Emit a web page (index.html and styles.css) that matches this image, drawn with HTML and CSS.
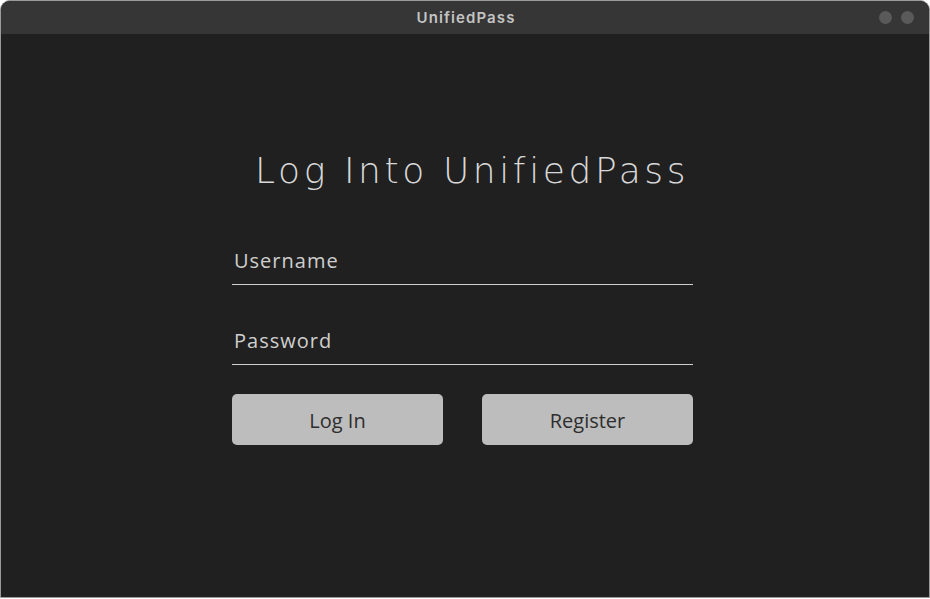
FILE: index.html
```html
<!DOCTYPE html>
<html>
<head>
<meta charset="utf-8">
<link rel="stylesheet" href="styles.css">
</head>
<body>
<div class="window">
  <div class="titlebar">
    <span class="title">UnifiedPass</span>
    <div class="dots"><span class="dot"></span><span class="dot"></span></div>
  </div>
  <div class="content">
    <h1 class="heading">Log Into UnifiedPass</h1>
    <div class="form">
      <div class="field"><span class="label">Username</span></div>
      <div class="field"><span class="label">Password</span></div>
      <div class="buttons">
        <button class="btn">Log In</button>
        <button class="btn">Register</button>
      </div>
    </div>
  </div>
</div>
</body>
</html>
```
FILE: styles.css
```css
html, body { margin: 0; padding: 0; background: #ffffff; }
body { width: 930px; height: 599px; overflow: hidden; }
.window {
  box-sizing: border-box;
  width: 930px;
  height: 598px;
  border: 1px solid #9a9a9a;
  border-radius: 10px 10px 0 0;
  overflow: hidden;
  background: #202020;
  display: flex;
  flex-direction: column;
}
.titlebar {
  height: 33px;
  flex: none;
  background: #363636;
  position: relative;
  display: flex;
  align-items: center;
  justify-content: center;
}
.title {
  font-family: "Inter", "Liberation Sans", sans-serif;
  font-weight: 600;
  font-size: 15px;
  color: #c4c4c4;
  letter-spacing: 1.1px;
  margin-right: -2px;
}
.dots {
  position: absolute;
  right: 15px;
  top: 10px;
  display: flex;
  gap: 9px;
}
.dot { width: 13px; height: 13px; border-radius: 50%; background: #5a5a5a; }
.content {
  flex: 1;
  display: flex;
  flex-direction: column;
  align-items: center;
}
.heading {
  margin: 115px 0 0 14px;
  font-family: "DejaVu Sans", sans-serif;
  font-weight: 200;
  font-size: 36px;
  letter-spacing: 3.6px;
  color: #d8d8d8;
  line-height: 44px;
}
.form { width: 461px; margin-top: 42px; margin-left: -5px; }
.field {
  height: 50px;
  border-bottom: 1px solid #d0d0d0;
  margin-bottom: 30px;
  display: flex;
  align-items: center;
  padding-left: 2px;
  box-sizing: border-box;
}
.field + .field { margin-bottom: 29px; }
.label {
  font-family: "Open Sans", sans-serif;
  font-size: 20px;
  letter-spacing: 1px;
  color: #cfcfcf;
  margin-top: 1px;
}
.buttons { display: flex; justify-content: space-between; }
.btn {
  width: 211px;
  height: 51px;
  border: none;
  border-radius: 5px;
  background: #bdbdbd;
  font-family: "Open Sans", sans-serif;
  font-size: 20px;
  color: #2e2e2e;
  padding: 0;
  padding-top: 2px;
}
```
